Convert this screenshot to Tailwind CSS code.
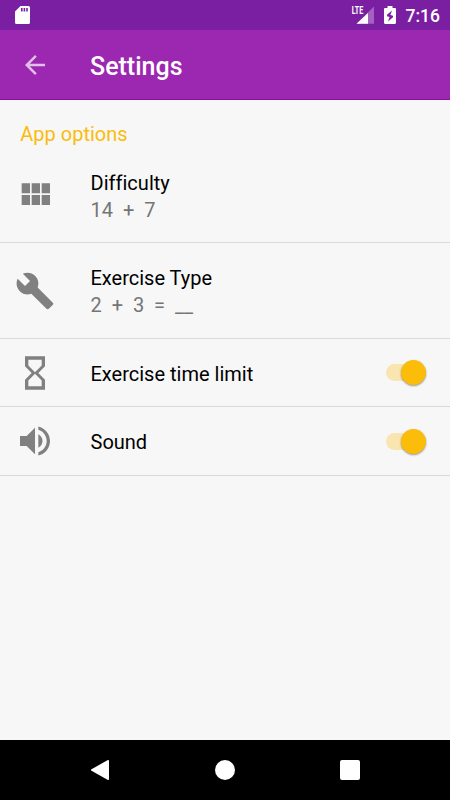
<!DOCTYPE html>
<html lang="en">
<head>
    <meta charset="UTF-8">
    <meta name="viewport" content="width=device-width, initial-scale=1.0">
    <title>Settings</title>
    <script src="https://cdn.jsdelivr.net/npm/@tailwindcss/browser@4"></script>
</head>
<body class="bg-[#f7f7f7] font-[Roboto,sans-serif] text-black">
    <div class="flex flex-col h-screen overflow-hidden">
        <!-- Status bar -->
        <div class="h-[30px] shrink-0 bg-[#7b1fa2] flex items-center justify-between pl-[15px] pr-[10px] text-white">
            <svg class="w-[15px] h-[18px]" viewBox="0 0 15 18" fill="currentColor">
                <path fill-rule="evenodd" d="M5.500 0H13.500a1.500 1.500 0 0 1 1.500 1.500v15a1.500 1.500 0 0 1-1.500 1.500h-12A1.500 1.500 0 0 1 0 16.500V5.500zM6 2v3.500h1.600V2zm2.600 0v3.500h1.600V2zm2.600 0v3.500h1.600V2z"/>
            </svg>
            <div class="flex items-center">
                <svg class="w-[23px] h-[20px]" viewBox="0 0 23 20" fill="currentColor">
                    <text x=".8" y="9" font-size="10" font-weight="700" textLength="11.500" lengthAdjust="spacingAndGlyphs">LTE</text>
                    <path opacity=".3" d="M23 1.500v17.300H5.500z"/>
                    <path d="M17 8v10.800H5.500z"/>
                </svg>
                <svg class="w-[12px] h-[18px] ml-[10px]" viewBox="0 0 12 18" fill="currentColor">
                    <path fill-rule="evenodd" d="M3.500 0h5v2h2.300c.7 0 1.200.5 1.200 1.200v13.600c0 .7-.5 1.200-1.200 1.200H1.200C.5 18 0 17.500 0 16.800V3.200C0 2.500.5 2 1.200 2h2.300zM8 4.500l-5 4.300v1.400l2.600.8L4 15.500l5-4.300V9.800L6.400 9z"/>
                </svg>
                <span class="ml-[10px] text-[17.500px] font-medium leading-[30px] pt-[2px]">7:16</span>
            </div>
        </div>

        <!-- Toolbar -->
        <div class="h-[70px] shrink-0 bg-[#9c27b0] border-b border-[#8a0f9f] flex items-center pl-5 text-white">
            <svg class="w-[30px] h-[30px] text-white/70" viewBox="0 0 24 24" fill="currentColor">
                <path d="M20 11H7.830l5.590-5.590L12 4l-8 8 8 8 1.410-1.410L7.830 13H20v-2z"/>
            </svg>
            <h1 class="ml-10 pt-[5px] text-[25px] font-medium leading-[30px]">Settings</h1>
        </div>

        <!-- Options -->
        <div class="flex-1">
            <h2 class="h-[60px] pl-[20.300px] pt-[22px] text-[20px] leading-[24px] text-[#fbbc0a]">App options</h2>

            <div class="h-[83px] border-b border-[#d9d9d9] flex pl-[15px]">
                <svg class="w-[40px] h-[40px] mt-[15px] text-[#808080]" viewBox="0 0 24 24" fill="currentColor">
                    <path d="M4 11h5V5H4v6zm0 7h5v-6H4v6zm6 0h5v-6h-5v6zm6 0h5v-6h-5v6zm-6-7h5V5h-5v6zm6-6v6h5V5h-5z"/>
                </svg>
                <div class="ml-[35.500px] pt-[10px] text-[20px] leading-[27px]">
                    <p class="tracking-[0.020px]">Difficulty</p>
                    <p class="text-[#757575] whitespace-pre">14  +  7</p>
                </div>
            </div>

            <div class="h-[96px] border-b border-[#d9d9d9] flex pl-[15px]">
                <svg class="w-[40px] h-[40px] mt-[28px] text-[#808080]" viewBox="0 0 24 24" fill="currentColor">
                    <path d="M22.700 19l-9.100-9.100c.9-2.300.4-5-1.500-6.900-2-2-5-2.400-7.400-1.300L9 6 6 9 1.600 4.700C.4 7.100.9 10.100 2.900 12.100c1.900 1.900 4.600 2.400 6.900 1.500l9.100 9.100c.4.4 1 .4 1.400 0l2.300-2.300c.5-.4.5-1.100.1-1.400z"/>
                </svg>
                <div class="ml-[35.500px] pt-[22px] text-[20px] leading-[27px]">
                    <p>Exercise Type</p>
                    <p class="text-[#757575] whitespace-pre">2  +  3  =  __</p>
                </div>
            </div>

            <div class="h-[68px] border-b border-[#d9d9d9] flex items-center pl-[15px] pr-[24px]">
                <svg class="w-[40px] h-[40px] text-[#808080]" viewBox="0 0 24 24" fill="currentColor">
                    <path d="M6 2v6h.01L6 8.010 10 12l-4 4 .01.01H6V22h12v-5.990h-.01L18 16l-4-4 4-3.990-.01-.01H18V2H6zm10 14.500V20H8v-3.500l4-4 4 4zm-4-5l-4-4V4h8v3.500l-4 4z"/>
                </svg>
                <span class="ml-[35.500px] flex-1 pt-[2px] text-[20px] leading-[24px]">Exercise time limit</span>
                <div class="w-[40px] h-[17px] flex items-center justify-end rounded-full bg-[#fbbc0a]/30">
                    <div class="w-[25px] h-[25px] rounded-full bg-[#fbbc0a] shrink-0 shadow-[0_1px_2px_rgba(0,0,0,0.4)]"></div>
                </div>
            </div>

            <div class="h-[69px] border-b border-[#d9d9d9] flex items-center pl-[15px] pr-[24px]">
                <svg class="w-[40px] h-[40px] text-[#808080]" viewBox="0 0 24 24" fill="currentColor">
                    <path d="M3 9v6h4l5 5V4L7 9H3zm13.500 3c0-1.770-1.020-3.290-2.500-4.030v8.050c1.480-.73 2.500-2.250 2.500-4.020zM14 3.230v2.060c2.890.86 5 3.540 5 6.710s-2.110 5.850-5 6.710v2.060c4.010-.91 7-4.490 7-8.770s-2.990-7.860-7-8.770z"/>
                </svg>
                <span class="ml-[35.500px] flex-1 pt-[2px] text-[20px] leading-[24px]">Sound</span>
                <div class="w-[40px] h-[17px] flex items-center justify-end rounded-full bg-[#fbbc0a]/30">
                    <div class="w-[25px] h-[25px] rounded-full bg-[#fbbc0a] shrink-0 shadow-[0_1px_2px_rgba(0,0,0,0.4)]"></div>
                </div>
            </div>
        </div>

        <!-- Navigation bar -->
        <div class="h-[60px] shrink-0 bg-black flex items-center justify-center gap-[105px] text-white">
            <svg class="w-5 h-5" viewBox="0 0 20 20" fill="currentColor">
                <path d="M17.500.2c.9-.5 1.500 0 1.500.8v18c0 .8-.6 1.300-1.500.8L1.500 10.800c-.7-.4-.7-1.200 0-1.600z"/>
            </svg>
            <div class="w-5 h-5 rounded-full bg-white"></div>
            <div class="w-5 h-5 rounded-[2px] bg-white"></div>
        </div>
    </div>
</body>
</html>
